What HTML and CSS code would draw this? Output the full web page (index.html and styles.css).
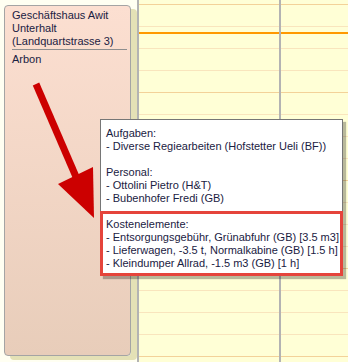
FILE: index.html
```html
<!DOCTYPE html>
<html>
<head>
  <title>Einsatzplan</title>
  <link rel="stylesheet" href="styles.css">
</head>
<body>
  <div class="board">
    <div class="resources">
      <div class="job">
        <div class="job-title">Geschäftshaus Awit<br>Unterhalt<br>(Landquartstrasse 3)</div>
        <div class="job-place">Arbon</div>
      </div>
    </div>
    <div class="day"></div>
    <div class="day day-last"></div>

    <!-- marker arrow -->
    <svg class="arrow" width="348" height="362" viewBox="0 0 348 362">
      <line x1="36" y1="84" x2="80" y2="186" stroke="#cc0000" stroke-width="7" />
      <polygon points="94,218 58,184 93,167" fill="#cc0000" />
    </svg>

    <!-- Tooltip -->
    <div class="tip">
      <div class="tip-section">Aufgaben:<br>- Diverse Regiearbeiten (Hofstetter Ueli (BF))</div>
      <div class="tip-section">Personal:<br>- Ottolini Pietro (H&amp;T)<br>- Bubenhofer Fredi (GB)</div>
      <div class="tip-costs">Kostenelemente:<br>- Entsorgungsgebühr, Grünabfuhr (GB) [3.5 m3]<br>- Lieferwagen, -3.5 t, Normalkabine (GB) [1.5 h]<br>- Kleindumper Allrad, -1.5 m3 (GB) [1 h]</div>
    </div>
  </div>
</body>
</html>
```

FILE: styles.css
```css
body {
  margin: 0;
  font-family: 'Liberation Sans', Arial, sans-serif;
  font-size: 11px;
  color: #1a2142;
}

.board {
  position: relative;
  width: 348px;
  height: 362px;
  display: flex;
  overflow: hidden;
  background: #fffff2;
}

.resources {
  width: 137px;
  flex-shrink: 0;
  padding: 5px 0 0 4px;
  box-sizing: border-box;
}

.job {
  width: 127px;
  height: 351px;
  box-sizing: border-box;
  border: 1px solid #a4a4a4;
  border-radius: 4px;
  background: linear-gradient(to bottom, #fcdfd1, #e8cdba);
  box-shadow: 6px 4px 0 #e4e1b6;
  padding: 3px 3px 0 7px;
  line-height: 13px;
}

.job-title {
  padding-bottom: 1px;
  border-bottom: 1px solid #8e8e8e;
}

.job-place {
  padding-top: 3px;
}

.day {
  width: 140px;
  flex-shrink: 0;
  border-left: 2px solid #b3b3b3;
  background:
    linear-gradient(#ff9900, #ff9900) 0 32px / 100% 2px no-repeat,
    linear-gradient(#f3d299 1px, transparent 1px) 0 4px / 100% 88px,
    linear-gradient(#f9e5bd 1px, transparent 1px) 0 4px / 100% 22px,
    #ffffd6;
}

.day-last {
  flex: 1;
}

.arrow {
  position: absolute;
  left: 0;
  top: 0;
  pointer-events: none;
}

.tip {
  position: absolute;
  left: 100px;
  top: 119px;
  width: 243px;
  box-sizing: border-box;
  background: white;
  border: 1px solid #767676;
  box-shadow: 3px 3px 1px rgba(0,0,0,0.28);
  padding: 7px 5px 0 5px;
  line-height: 13px;
  white-space: nowrap;
}

.tip-section + .tip-section {
  margin-top: 13px;
}

.tip-costs {
  margin: 6px -6px -1px -6px;
  border: 3px solid #e5443b;
  padding: 4px 3px 3px 3px;
}
```
